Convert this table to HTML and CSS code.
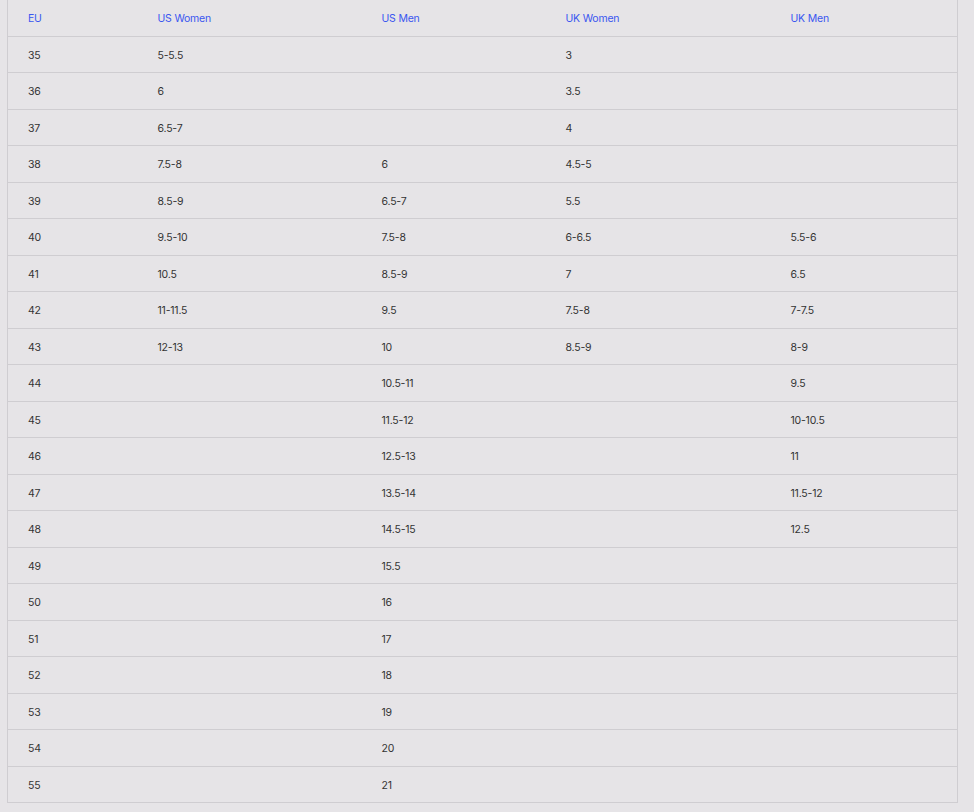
FILE: index.html
```html
<!DOCTYPE html>
<html>
<head>
<meta charset="utf-8">
<link rel="stylesheet" href="styles.css">
</head>
<body>
<table class="size-table">
  <colgroup>
    <col class="c1"><col class="c2"><col class="c3"><col class="c4"><col class="c5">
  </colgroup>
  <thead>
    <tr><th>EU</th><th>US Women</th><th>US Men</th><th>UK Women</th><th>UK Men</th></tr>
  </thead>
  <tbody>
    <tr><td>35</td><td>5-5.5</td><td></td><td>3</td><td></td></tr>
    <tr><td>36</td><td>6</td><td></td><td>3.5</td><td></td></tr>
    <tr><td>37</td><td>6.5-7</td><td></td><td>4</td><td></td></tr>
    <tr><td>38</td><td>7.5-8</td><td>6</td><td>4.5-5</td><td></td></tr>
    <tr><td>39</td><td>8.5-9</td><td>6.5-7</td><td>5.5</td><td></td></tr>
    <tr><td>40</td><td>9.5-10</td><td>7.5-8</td><td>6-6.5</td><td>5.5-6</td></tr>
    <tr><td>41</td><td>10.5</td><td>8.5-9</td><td>7</td><td>6.5</td></tr>
    <tr><td>42</td><td>11-11.5</td><td>9.5</td><td>7.5-8</td><td>7-7.5</td></tr>
    <tr><td>43</td><td>12-13</td><td>10</td><td>8.5-9</td><td>8-9</td></tr>
    <tr><td>44</td><td></td><td>10.5-11</td><td></td><td>9.5</td></tr>
    <tr><td>45</td><td></td><td>11.5-12</td><td></td><td>10-10.5</td></tr>
    <tr><td>46</td><td></td><td>12.5-13</td><td></td><td>11</td></tr>
    <tr><td>47</td><td></td><td>13.5-14</td><td></td><td>11.5-12</td></tr>
    <tr><td>48</td><td></td><td>14.5-15</td><td></td><td>12.5</td></tr>
    <tr><td>49</td><td></td><td>15.5</td><td></td><td></td></tr>
    <tr><td>50</td><td></td><td>16</td><td></td><td></td></tr>
    <tr><td>51</td><td></td><td>17</td><td></td><td></td></tr>
    <tr><td>52</td><td></td><td>18</td><td></td><td></td></tr>
    <tr><td>53</td><td></td><td>19</td><td></td><td></td></tr>
    <tr><td>54</td><td></td><td>20</td><td></td><td></td></tr>
    <tr><td>55</td><td></td><td>21</td><td></td><td></td></tr>
  </tbody>
</table>
</body>
</html>
```
FILE: styles.css
```css
html, body {
  margin: 0;
  padding: 0;
  background: #e6e4e7;
}
body {
  padding: 0 16px 10px 7px;
  font-family: Inter, "Liberation Sans", sans-serif;
  font-size: 10.5px;
  letter-spacing: -0.2px;
  color: #333;
}
.size-table {
  width: 950px;
  table-layout: fixed;
  border-collapse: collapse;
  border-left: 1px solid #cfcdd1;
  border-right: 1px solid #cfcdd1;
  border-bottom: 1px solid #cfcdd1;
}
.c1 { width: 130px; }
.c2 { width: 224px; }
.c3 { width: 184px; }
.c4 { width: 225px; }
.c5 { width: 187px; }
.size-table th,
.size-table td {
  text-align: left;
  font-weight: 400;
  padding: 11px 20px 9px 20px;
  line-height: 15.5px;
  border-bottom: 1px solid #cfcdd1;
  white-space: nowrap;
}
.size-table th {
  color: #3a56f0;
}
```
